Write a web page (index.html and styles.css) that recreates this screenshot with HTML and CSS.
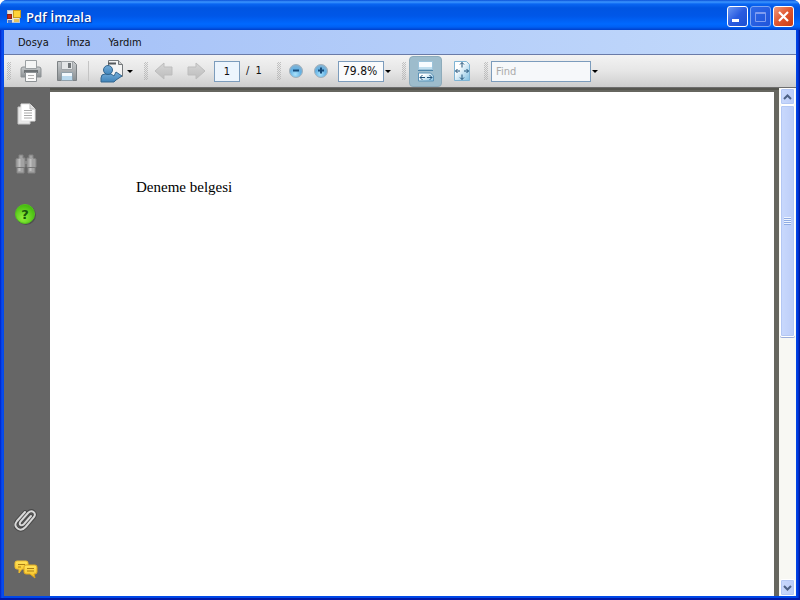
FILE: index.html
```html
<!DOCTYPE html>
<html lang="tr">
<head>
<meta charset="utf-8">
<title>Pdf İmzala</title>
<link rel="stylesheet" href="styles.css">
</head>
<body>
<svg class="defs" width="0" height="0" aria-hidden="true">
  <defs>
    <linearGradient id="metal" x1="0" y1="0" x2="0" y2="1"><stop offset="0" stop-color="#c8cbcd"/><stop offset="1" stop-color="#8a8f92"/></linearGradient>
    <linearGradient id="blue" x1="0" y1="0" x2="0" y2="1"><stop offset="0" stop-color="#76aeda"/><stop offset="1" stop-color="#3f84ba"/></linearGradient>
    <linearGradient id="sheet" x1="0" y1="0" x2="1" y2="1"><stop offset="0.3" stop-color="#ffffff"/><stop offset="1" stop-color="#7fbfe2"/></linearGradient>
    <linearGradient id="yellow" x1="0" y1="0" x2="0" y2="1"><stop offset="0" stop-color="#ffe45c"/><stop offset="1" stop-color="#f7bf22"/></linearGradient>
    <linearGradient id="faded" x1="0" y1="0" x2="0" y2="1"><stop offset="0" stop-color="#d6d6d6"/><stop offset="1" stop-color="#bcbcbc"/></linearGradient>
    <radialGradient id="orb" cx="0.45" cy="0.75" r="0.7"><stop offset="0" stop-color="#a9e2fc"/><stop offset="0.6" stop-color="#64b1e3"/><stop offset="1" stop-color="#84b3d3"/></radialGradient>
    <radialGradient id="green" cx="0.4" cy="0.7" r="0.7"><stop offset="0" stop-color="#90f03c"/><stop offset="1" stop-color="#42b90d"/></radialGradient>
  </defs>
</svg>
<div class="window">
  <header class="titlebar">
    <svg class="app-icon" width="16" height="16" viewBox="0 0 16 16">
      <rect x="1.500" y="1.500" width="12" height="12" fill="#e9e6d5" stroke="#b9c3d4"/>
      <rect x="1.500" y="5.500" width="4" height="4" fill="#c62818" stroke="#8c2317"/>
      <rect x="7.500" y="1.500" width="7" height="7" fill="#ffd337" stroke="#c79a1c"/>
      <rect x="2" y="11" width="4" height="3" fill="#4c77cf"/>
      <rect x="8" y="10" width="5" height="3" fill="#e6c35c"/>
    </svg>
    <h1>Pdf İmzala</h1>
    <button class="caption" aria-label="Minimize"><svg width="19" height="19"><rect x="4" y="12" width="7" height="3" fill="#fff"/></svg></button>
    <button class="caption dim" aria-label="Maximize" disabled><svg width="19" height="19"><path d="M4.500 5.500h10v9h-10zM4 6.500h11" fill="none" stroke="#7f9cf0"/></svg></button>
    <button class="caption close" aria-label="Close"><svg width="19" height="19"><path d="M5 5l9 9M14 5l-9 9" stroke="#fff" stroke-width="2.200"/></svg></button>
  </header>
  <nav class="menubar">
    <button>Dosya</button><button>İmza</button><button>Yardım</button>
  </nav>
  <div class="toolbar">
    <span class="grip"></span>
    <button class="tool" aria-label="Print"><svg width="24" height="24" viewBox="0 0 24 24">
      <path d="M2 10q0-2 2-2h16q2 0 2 2v8H2z" fill="url(#metal)" stroke="#8b9093"/>
      <path d="M6.500 1.500h11v8h-11z" fill="#f4f5f5" stroke="#9ba0a3"/>
      <path d="M5 11h14v3H5z" fill="#6d7275"/><path d="M6.500 13.500h11v9h-11z" fill="#fafafa" stroke="#8c9194"/><path d="M9 16.500h6M9 19.500h6" stroke="#b0b0b0"/>
    </svg></button>
    <button class="tool" aria-label="Save"><svg width="24" height="24" viewBox="0 0 24 24">
      <path d="M2.500 2.500h16l3 3v16h-19z" fill="url(#metal)" stroke="#7c8184"/>
      <path d="M6.500 2.500h11v8h-11z" fill="#e4e6e7" stroke="#a0a5a8"/><path d="M13 4h3v5h-3z" fill="#6f7477"/>
      <path d="M6.500 13.500h11v8h-11z" fill="#f2f8fc" stroke="#90a0aa"/><path d="M7 17h10v4H7z" fill="#b9d9ee"/>
    </svg></button>
    <span class="rule"></span>
    <button class="tool share" aria-label="Collaborate"><svg width="24" height="24" viewBox="0 0 24 24">
      <path d="M8.500 1.500h10l4 4v12h-14z" fill="#f4f4f4" stroke="#74787b"/><path d="M18.500 1.500v4h4" fill="#ccc" stroke="#74787b"/><path d="M8 4.500h8" stroke="#55595c" stroke-width="2"/>
      <path d="M1 23v-4q0-4 4-4h6l3 2 2-4 6 4-6 4-2 2z" fill="url(#blue)" stroke="#34668e"/>
      <circle cx="8" cy="11" r="4.500" fill="url(#blue)" stroke="#34668e"/>
    </svg><span class="caret"></span></button>
    <span class="grip after-menu"></span>
    <button class="tool step" aria-label="Previous page" disabled><svg width="20" height="20" viewBox="0 0 20 20"><path d="M1 10l9-8v4h8v8h-8v4z" fill="url(#faded)" stroke="#bdbdbd" stroke-linejoin="round"/></svg></button>
    <button class="tool step" aria-label="Next page" disabled><svg width="20" height="20" viewBox="0 0 20 20"><path d="M19 10l-9-8v4H2v8h8v4z" fill="url(#faded)" stroke="#bdbdbd" stroke-linejoin="round"/></svg></button>
    <input class="field page-no" aria-label="Page number" value="1">
    <span class="page-count">/&nbsp; 1</span>
    <span class="grip"></span>
    <button class="tool zoom" aria-label="Zoom out"><svg width="16" height="16" viewBox="0 0 16 16"><circle cx="8" cy="8" r="6.500" fill="url(#orb)" stroke="#a3b0ba"/><path d="M5 7.500h6" stroke="#174a78" stroke-width="2"/></svg></button>
    <button class="tool zoom" aria-label="Zoom in"><svg width="16" height="16" viewBox="0 0 16 16"><circle cx="8" cy="8" r="6.500" fill="url(#orb)" stroke="#a3b0ba"/><path d="M5 7.500h6M8 4.500v6" stroke="#174a78" stroke-width="2"/></svg></button>
    <select class="field zoom-level" aria-label="Zoom level"><option>79.8%</option></select>
    <span class="caret"></span>
    <span class="grip after-caret"></span>
    <button class="tool active" aria-label="Fit width" aria-pressed="true"><svg width="18" height="22" viewBox="0 0 18 22">
      <path d="M1.500 1.500h14v8h-14z" fill="#f8fcff" stroke="#9cc3da"/><path d="M2 7h13v2H2z" fill="#c2dfef"/><path d="M1 10.500h15" stroke="#4c83a8"/>
      <path d="M1.500 21v-8h12l3 3v5z" fill="url(#sheet)" stroke="#5d94b8"/><path d="M3 17.500h5M10 17.500h5M5.500 15L3 17.500 5.500 20M12.500 15l2.500 2.500-2.500 2.500" fill="none" stroke="#1f5078"/>
    </svg></button>
    <button class="tool" aria-label="Fit page"><svg width="18" height="22" viewBox="0 0 18 22">
      <path d="M1.500 1.500h12l3 3v16h-15z" fill="url(#sheet)" stroke="#7fb4d4"/>
      <path d="M9 2.500v5M9 19.500v-5M2.500 11H7M15.500 11H11M7 4.500l2-2 2 2M7 17.500l2 2 2-2M4.500 9l-2 2 2 2M13.500 9l2 2-2 2" fill="none" stroke="#1f5078"/>
    </svg></button>
    <span class="grip before-find"></span>
    <input class="field find" aria-label="Find" placeholder="Find">
    <button class="caret-button" aria-label="Find options"><span class="caret"></span></button>
  </div>
  <div class="workspace">
    <aside class="sidebar">
      <button aria-label="Pages"><svg width="24" height="24" viewBox="0 0 24 24"><path d="M4 5h12v17H4z" fill="#e9e9e9" stroke="#c4c4c4"/><path d="M7 2h9l5 5v12H7z" fill="#fff" stroke="#e4e4e4"/><path d="M16 2v5h5" fill="#ddd" stroke="#bbb"/><path d="M10 8.500h8M10 11h8M10 13.500h8M10 16h8" stroke="#a8a8a8"/></svg></button>
      <button aria-label="Search"><svg width="24" height="24" viewBox="0 0 24 24">
        <path d="M5 3h4v3h2v9l-1 1v5H3v-5l-1-1V7l3-1zM15 3h4v3l3 1v8l-1 1v5h-7v-5l-1-1V6h2z" fill="#a2a2a2" stroke="#838383"/><path d="M5.500 7v12M16.500 7v12" stroke="#bfbfbf" stroke-width="2"/><path d="M2 15.500h9M13 15.500h9" stroke="#777"/><path d="M11 9h2v3h-2z" fill="#8b8b8b"/></svg></button>
      <button aria-label="Help"><svg width="24" height="24" viewBox="0 0 24 24"><circle cx="12" cy="13" r="10" fill="#4f4f4f"/><circle cx="11" cy="12" r="9.500" fill="url(#green)" stroke="#54c41d"/><text class="question" x="11" y="17" text-anchor="middle">?</text></svg></button>
      <span class="spring"></span>
      <button aria-label="Attachments"><svg width="24" height="24" viewBox="0 0 24 24" fill="none" stroke-linecap="round">
        <path d="M17 8l-7 8q-2 2-3.500 1t0-3.500L14 5q3-3 5.500-1t.5 5l-8.500 10q-4 4.500-8 1.500t-.5-7.500L11 4" stroke="#484848" stroke-width="4"/>
        <path d="M17 8l-7 8q-2 2-3.500 1t0-3.500L14 5q3-3 5.500-1t.5 5l-8.500 10q-4 4.500-8 1.500t-.5-7.500L11 4" stroke="#d8d8d8" stroke-width="2"/></svg></button>
      <button aria-label="Comments"><svg width="24" height="24" viewBox="0 0 24 24"><path d="M3 3h9q2 0 2 2v4q0 2-2 2H8l-3 4v-4H3q-2 0-2-2V5q0-2 2-2z" fill="url(#yellow)" stroke="#efbc2c"/><path d="M4 6.500h7M4 9h3" stroke="#aa7c14"/><path d="M12 7h9q2 0 2 2v5q0 2-2 2h-1l1 4-5-4h-4q-2 0-2-2V9q0-2 2-2z" fill="url(#yellow)" stroke="#dba41c"/><path d="M13 10.500h7M13 13h7" stroke="#aa7c14"/></svg></button>
    </aside>
    <main class="page"><p>Deneme belgesi</p></main>
    <div class="scrollbar">
      <button class="arrow" aria-label="Scroll up"><svg width="9" height="6"><path d="M1 5l3.500-3.500L8 5" fill="none" stroke="#4d6185" stroke-width="2"/></svg></button>
      <div class="track"><div class="thumb" style="height:49%"><span class="ridges"></span></div></div>
      <button class="arrow" aria-label="Scroll down"><svg width="9" height="6"><path d="M1 1l3.500 3.500L8 1" fill="none" stroke="#4d6185" stroke-width="2"/></svg></button>
    </div>
  </div>
</div>
</body>
</html>
```
FILE: styles.css
```css
* { box-sizing: border-box; }
html, body { margin: 0; height: 100%; background: #fff; }
body, button, input, select { font: 11px/14px "DejaVu Sans Condensed", "DejaVu Sans", sans-serif; color: #111; }
button { border: 0; padding: 0; background: none; display: flex; align-items: center; justify-content: center; }
svg { display: block; flex: none; }
.defs { position: absolute; }

.window {
  height: 100vh;
  display: flex;
  flex-direction: column;
  padding: 0 4px 4px;
  border-radius: 7px 7px 0 0;
  background: linear-gradient(90deg, #0020c4, #0a4df0 2px, #0048e8 4px, #0048e8 calc(100% - 4px), #0038dd calc(100% - 2px), #00138c);
  box-shadow: inset 0 -2px 0 #0019a8;
}

.titlebar {
  flex: none;
  display: flex;
  align-items: center;
  gap: 2px;
  height: 30px;
  margin: 0 -4px;
  padding: 3px 6px 0;
  border-radius: 7px 7px 0 0;
  background: linear-gradient(#0a50d8, #3c96ff 2px, #0a66f2 4px, #0055e2 8px, #0057e8 16px, #0069ff 24px, #0060f4 27px, #003fca);
}
.titlebar h1 {
  flex: 1;
  margin: 0 0 0 2px;
  font: 600 13px/18px "Open Sans", "Noto Sans", sans-serif;
  color: #fff;
  text-shadow: 1px 1px 1px #0a2a8c;
}
.caption {
  width: 21px;
  height: 21px;
  border: 1px solid #fff;
  border-radius: 3px;
  background: linear-gradient(135deg, #6b98f4, #2a5ce0 50%, #1b4fd2);
}
.caption.dim { border-color: #7da5f2; background: linear-gradient(135deg, #2f6ae8, #2054da); }
.caption.close { background: linear-gradient(135deg, #f09a7d, #e0552e 50%, #c83c14); }

.menubar {
  flex: none;
  display: flex;
  gap: 18px;
  height: 24px;
  padding: 1px 14px 0;
  background: linear-gradient(90deg, #a3bff7, #c3dafb);
}

.toolbar {
  flex: none;
  display: flex;
  align-items: center;
  height: 34px;
  padding-left: 3px;
  border-top: 1px solid #6a7ba8;
  border-bottom: 1px solid #6d6d6d;
  background: linear-gradient(#f3f3f3, #e6e6e6 50%, #cdcdcd);
}
.grip {
  flex: none;
  width: 4px;
  height: 18px;
  margin-right: 2px;
  background: repeating-conic-gradient(#a4a4a4 0 25%, transparent 0 50%) 0 0 / 2px 2px;
  opacity: 0.6;
}
.grip.after-menu { margin: 0 0 0 8px; }
.grip.after-caret { margin: 0 3px 0 11px; }
.grip.before-find { margin: 0 3px 0 4px; }
.rule { width: 1px; height: 20px; margin: 0 8px 0 3px; background: #c4c4c4; }
.tool { flex: none; width: 36px; height: 31px; }
.share { width: 39px; gap: 3px; }
.step { width: 32px; }
.zoom { width: 25px; }
.active {
  width: 33px;
  margin-right: 2px;
  border: 1px solid #8dabbb;
  border-radius: 4px;
  background: #9dbccc;
}
.caret { flex: none; width: 6px; border: 3px solid transparent; border-top-color: #000; border-bottom: 0; }
.field {
  flex: none;
  height: 21px;
  margin: 0;
  padding: 0 4px;
  border: 1px solid #7c9cbc;
  border-radius: 0;
  background: #f6f8fa;
  outline: 0;
  appearance: none;
}
.page-no { width: 26px; margin-left: 2px; text-align: center; background: #edf5fd; }
.page-count { width: 31px; margin-left: 6px; white-space: nowrap; }
.zoom-level { width: 46px; margin-left: 5px; margin-right: 1px; font-size: 12px; background: #fafbfc; }
.find { width: 100px; }
.find::placeholder { color: #aaa; opacity: 1; }
.caret-button { width: 8px; height: 21px; }

.workspace { flex: 1; min-height: 0; display: flex; background: #66665f; box-shadow: inset 0 2px 0 #55554f; }
.sidebar {
  flex: none;
  display: flex;
  flex-direction: column;
  align-items: center;
  gap: 26px;
  width: 46px;
  padding: 14px 2px 14px 0;
  background: #666;
}
.sidebar button { height: 24px; }
.spring { flex: 1; }
.question { font: bold 13px "DejaVu Sans", sans-serif; fill: #17560a; }
.page { flex: 1; margin: 4px 5px 0 0; padding: 86px; background: #fff; }
.page p { margin: 0; font: 15px/18px "Liberation Serif", serif; color: #000; }

.scrollbar { flex: none; display: flex; flex-direction: column; width: 17px; background: #f8f8f3; }
.arrow, .thumb {
  margin: 0 1px;
  border: 1px solid #fff;
  border-radius: 2px;
  background: linear-gradient(90deg, #c9d9fd, #bccdf8);
  box-shadow: inset 0 0 0 1px #b4c8f4;
}
.arrow { flex: none; height: 17px; }
.track { flex: 1; min-height: 0; }
.thumb { display: flex; align-items: center; justify-content: center; box-shadow: inset 0 0 0 1px #b4c8f4, 0 1px 0 #9caedb; }
.ridges { width: 7px; height: 8px; background: repeating-linear-gradient(#eef4fe 0 1px, #8fabe4 1px 2px); }
```
